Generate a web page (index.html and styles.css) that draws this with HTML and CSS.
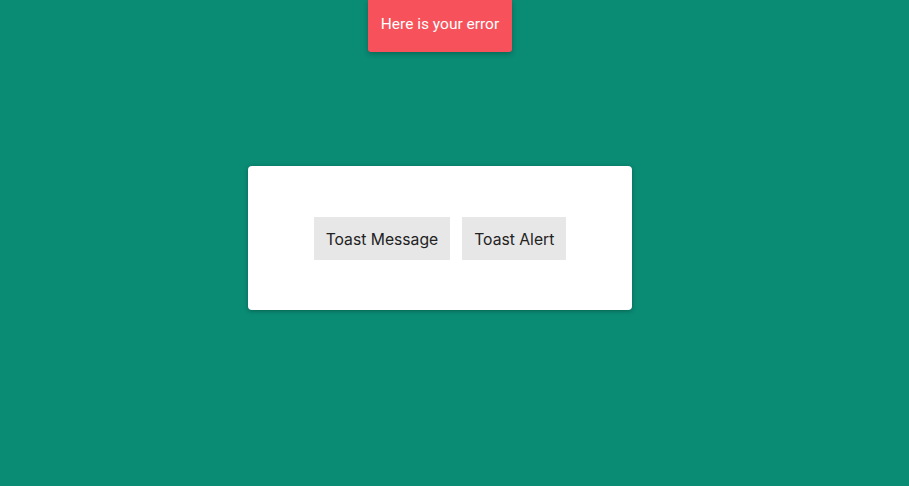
FILE: index.html
```html
<!DOCTYPE html>
<html>
<head>
<meta charset="utf-8">
<link rel="stylesheet" href="styles.css">
</head>
<body>
<div class="page">
  <div class="toast">Here is your error</div>
  <div class="card">
    <button class="btn">Toast Message</button>
    <button class="btn">Toast Alert</button>
  </div>
</div>
</body>
</html>
```
FILE: styles.css
```css
html, body {
  margin: 0;
  padding: 0;
  height: 100%;
  background: #0a8b74;
}
.page {
  position: relative;
  width: 880px;
  height: 486px;
  display: flex;
  flex-direction: column;
  align-items: center;
}
.toast {
  position: absolute;
  top: 0;
  left: 368px;
  width: 144px;
  height: 52px;
  box-sizing: border-box;
  padding-bottom: 4px;
  background: #f7525b;
  color: #fff;
  font-family: Roboto, "Liberation Sans", sans-serif;
  font-size: 15.5px;
  display: flex;
  align-items: center;
  justify-content: center;
  border-radius: 0 0 3px 3px;
  box-shadow: 0 2px 5px rgba(0,0,0,0.25);
}
.card {
  margin-top: 166px;
  width: 384px;
  height: 144px;
  background: #fff;
  border-radius: 4px;
  box-shadow: 0 1px 4px rgba(0,0,0,0.3);
  display: flex;
  align-items: center;
  justify-content: center;
  gap: 12px;
}
.btn {
  border: none;
  margin: 0;
  background: #e7e7e7;
  color: #222;
  font-family: Inter, "Noto Sans", sans-serif;
  font-size: 15.7px;
  height: 43px;
  padding: 2px 12px 0;
  border-radius: 0;
}
```
